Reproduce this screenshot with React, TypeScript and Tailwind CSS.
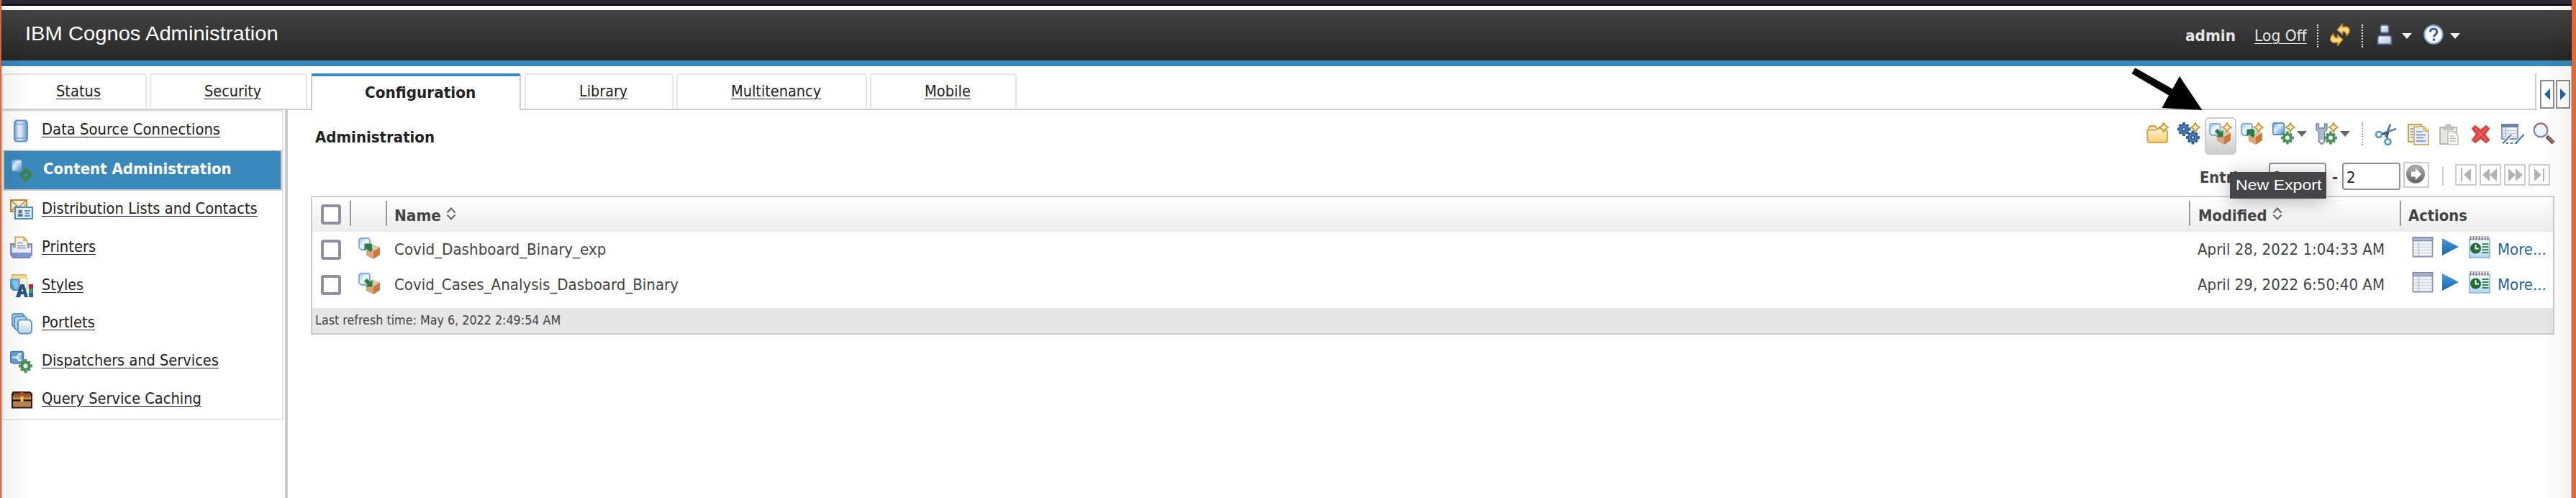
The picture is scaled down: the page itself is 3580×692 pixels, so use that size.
import { useLayoutEffect, useRef } from "react";
import type { ReactNode } from "react";

/* Text run laid out to an exact width, whatever the installed font's metrics. */
function Fit({ w, className = "", children }: { w: number; className?: string; children: ReactNode }) {
  const inner = useRef<HTMLSpanElement>(null);
  useLayoutEffect(() => {
    const el = inner.current;
    if (!el) return;
    el.style.transform = "none";
    el.style.transform = `scaleX(${w / el.offsetWidth})`;
  }, [w]);
  return (
    <span className="-mb-px block shrink-0 pt-px" style={{ width: w }}>
      <span
        ref={inner}
        className={`inline-block origin-left whitespace-pre align-top leading-[30px] ${className}`}
      >
        {children}
      </span>
    </span>
  );
}

const link = "underline decoration-1 underline-offset-[3px]";

function Icon({ children }: { children: ReactNode }) {
  return (
    <svg viewBox="0 0 32 32" className="block h-8 w-8 shrink-0">
      {children}
    </svg>
  );
}

function Defs() {
  return (
    <svg className="absolute h-0 w-0">
      <defs>
        <linearGradient id="blueV" x1="0" y1="0" x2="1" y2="1">
          <stop offset="0" stopColor="#9cc8f4" />
          <stop offset=".5" stopColor="#f2f8fe" />
          <stop offset="1" stopColor="#8fb9e6" />
        </linearGradient>
        <linearGradient id="cyl" x1="0" y1="0" x2="1" y2="0">
          <stop offset="0" stopColor="#6f9fdc" />
          <stop offset=".35" stopColor="#eef3fb" />
          <stop offset=".6" stopColor="#cfdcf2" />
          <stop offset="1" stopColor="#5a8cd2" />
        </linearGradient>
        <linearGradient id="barrel" x1="0" y1="0" x2="1" y2="1">
          <stop offset="0" stopColor="#5d9fe6" />
          <stop offset=".4" stopColor="#dff0fd" />
          <stop offset="1" stopColor="#3f82cc" />
        </linearGradient>
        <linearGradient id="page" x1="0" y1="0" x2="0" y2="1">
          <stop offset="0" stopColor="#ffffff" />
          <stop offset="1" stopColor="#b4d5ec" />
        </linearGradient>
        <linearGradient id="folder" x1="0" y1="0" x2="0" y2="1">
          <stop offset="0" stopColor="#fff3cf" />
          <stop offset="1" stopColor="#f5ce74" />
        </linearGradient>
        <linearGradient id="play" x1="0" y1="0" x2="0" y2="1">
          <stop offset="0" stopColor="#5a9bdc" />
          <stop offset=".5" stopColor="#2f7fc4" />
          <stop offset="1" stopColor="#1f63a4" />
        </linearGradient>
        <linearGradient id="go" x1="0" y1="0" x2="0" y2="1">
          <stop offset="0" stopColor="#b4b4b4" />
          <stop offset="1" stopColor="#5e5e5e" />
        </linearGradient>
        <linearGradient id="user" x1="0" y1="0" x2="1" y2="1">
          <stop offset="0" stopColor="#ffffff" />
          <stop offset="1" stopColor="#b3c0d4" />
        </linearGradient>
        <linearGradient id="lid" x1="0" y1="0" x2="0" y2="1">
          <stop offset="0" stopColor="#7a4724" />
          <stop offset="1" stopColor="#e8a468" />
        </linearGradient>
      </defs>
    </svg>
  );
}

function Star() {
  return (
    <path
      d="M25 .8 27.200 4.800 31.200 7 27.200 9.200 25 13.200 22.800 9.200 18.800 7l4-2.200z"
      fill="#fbf3c4"
      stroke="#c0993a"
      strokeWidth="1.800"
    />
  );
}

function Gear({ cx, cy, r, color }: { cx: number; cy: number; r: number; color: string }) {
  return (
    <g transform={`translate(${cx} ${cy}) scale(${r / 10})`}>
      <path
        d="M-2-10h4v3h-4zM-2 7h4v3h-4zM-10-2h3v4h-3zM7-2h3v4h-3zM-7.800-5.400l2.400-2.400 2.400 2.400-2.400 2.400zM3-5.400l2.400-2.400 2.400 2.400-2.400 2.400zM-7.800 5.400l2.400-2.400 2.400 2.400-2.400 2.400zM3 5.400l2.400-2.400 2.400 2.400-2.400 2.400z"
        fill={color}
      />
      <circle r="5.400" fill="#f4faf4" stroke={color} strokeWidth="4.400" />
    </g>
  );
}

function Package({ out = false, star = false }: { out?: boolean; star?: boolean }) {
  return (
    <Icon>
      <path d="M3 2h11l2 2v14H4l-3-3V4z" fill="url(#blueV)" stroke="#7aabe2" strokeWidth="1.800" />
      <path d="M11 16 20 10.500 30 14.500 21 20z" fill="#e2c3a8" />
      <path d="m11 16 10 4v11l-10-5z" fill="#d9a57c" />
      <path d="m21 20 9-5.500V25l-9 6z" fill="#c97a3e" />
      {out ? (
        <path d="M19 20V9.500H8.500l3.200 3.200-1 1 6 6z M8.500 9.500v10l3-3 5 4.500 3.500-3.500-5-5 3-3z" fill="#2a7d42" />
      ) : (
        <path d="M19.500 20.500V10.500l-3 3-5-4.500L8 12.500l5 5-3 3z" fill="#2a7d42" />
      )}
      {star && <Star />}
    </Icon>
  );
}

const DataSource = () => (
  <Icon>
    <path d="M9 1.500h14l2 3v23l-2 3H9l-2-3v-23z" fill="url(#cyl)" stroke="#5d92d6" strokeWidth="2" />
    <path d="M8 6.500h16M8 26h16" stroke="#79a5de" strokeWidth="1.500" />
  </Icon>
);
const ContentAdmin = () => (
  <Icon>
    <path d="M4 1h11l1.500 2v12L15 17H4l-1.500-2V3z" fill="url(#barrel)" stroke="#5c9ce0" strokeWidth="1.300" />
    <g transform="translate(22 22) scale(.9)">
      <path d="M-2-10h4l1 3h3l1 1v3l3 1v4l-3 1v3l-1 1H3l-1 3h-4l-1-3h-3l-1-1V3l-3-1v-4l3-1v-3l1-1h3z" fill="#3f8350" />
      <circle r="3" fill="#3b88ba" />
    </g>
  </Icon>
);
const Contacts = () => (
  <Icon>
    <path d="M1 3h22v16H1z" fill="#fdf6e3" stroke="#b98a3a" strokeWidth="2.200" />
    <path d="m2 4 10 9L22 4M2 18l7-7m13 0-3-2" fill="none" stroke="#c79a50" strokeWidth="1.800" />
    <path d="M7 13h24v16H7z" fill="#e8f3fb" stroke="#4e8fc6" strokeWidth="2.200" />
    <path d="M10.500 16h7v10h-7z" fill="#b9c6d3" />
    <path d="M12.500 17h3.500v4h-3.500zM11 22.500h6.500V26H11z" fill="#5d6b7d" />
    <path d="M20 18h8M21 21.500h6M20 25h8" stroke="#5596ca" strokeWidth="1.800" />
  </Icon>
);
const Printer = () => (
  <Icon>
    <path d="M1 11h5v8h19v-8h5v15l-3 4H4l-3-4z" fill="#b3c2e6" stroke="#6f88bf" strokeWidth="1.800" />
    <path d="M2 23h28v3l-3 3H5l-3-3z" fill="#8297cd" />
    <path d="M7 1.500h12l5 5V20H7z" fill="#f7f7f0" stroke="#cfae62" strokeWidth="1.800" />
    <path d="M19 1.500v5h5" fill="#eac16a" stroke="#cfae62" strokeWidth="1.300" />
    <path d="M10 9.500h8M10 13.500h11" stroke="#8296c8" strokeWidth="1.600" />
    <path d="M3 16.500h26V23H3z" fill="#e9eefa" />
    <path d="M10 16.500h12" stroke="#8296c8" strokeWidth="1.600" />
  </Icon>
);
const Styles = () => (
  <Icon>
    <path d="M3 1h19v20H3z" fill="#fbe9b8" stroke="#e0b964" strokeWidth="1.800" />
    <path d="M7 5h17v14H7z" fill="#fdf5dc" stroke="#eccb80" strokeWidth="1.200" />
    <path d="M0 6.500h13.500V23H4l-4-4z" fill="#4f9bd0" />
    <path d="M2 8.500h9.500v12H6z" fill="#8cc3e6" />
    <path d="M8 32 14.500 14h5L25 32h-5l-1-4h-4l-1 4zm7.500-8h3L17 18.500z" fill="#27508a" />
    <path d="M26 14h6v6h-6z" fill="#b82050" />
    <path d="M26 20h6v6h-6z" fill="#3e9d5c" />
    <path d="M26 26h6v6h-6z" fill="#2a62ab" />
  </Icon>
);
const Portlets = () => (
  <Icon>
    <g fill="#b9d6ee" stroke="#5c95c6" strokeWidth="1.900">
      <path d="M5 2h12l3 3v13l-3 3H6l-3-3V4z" />
      <path d="M8 5.500h12l3 3v13l-3 3H9l-3-3V8z" />
      <path d="M13 10.500h14l3 3v13l-3 3H14l-3-3v-13z" fill="url(#page)" />
    </g>
  </Icon>
);
const Dispatchers = () => (
  <Icon>
    <path d="M2 1.500h15l1.500 2V18H4L.8 15.500V3z" fill="#6ba2d4" stroke="#4379b2" strokeWidth="1.600" />
    <path d="M3 9.500h5l5-4M8 9.500l5 4M11 5h3.500v2M11 14h3.500v-2M15 9.500h-5" fill="none" stroke="#e4f1fb" strokeWidth="2" />
    <Gear cx={21.500} cy={21.500} r={9.500} color="#4b9058" />
  </Icon>
);
const Chest = () => (
  <Icon>
    <path d="M4 4h24l3 3v20.500H2V7z" fill="#2a1a10" />
    <path d="M5 6h23l1.500 9H3.500z" fill="url(#lid)" />
    <path d="M8 6v7M12 6v7M21 6v7M25 6v7" stroke="#6a3c1c" strokeWidth="1" />
    <path d="M4 17.500h25V25.500H4z" fill="#bd8252" />
    <path d="M2 15.300h29v1.700H2z" fill="#2a1a10" />
    <path d="M14.500 5h4v6h-4z" fill="#cf4a1c" />
    <path d="M14.500 11h4v7h-4z" fill="#f0cc3e" />
  </Icon>
);
const Folder = () => (
  <Icon>
    <path d="M3.500 9 6 5h7l2.500 3.500H17" fill="#fbe0b0" stroke="#d79a56" strokeWidth="2" />
    <path d="M2.500 10.500h12l3-2h6L30 12v14.500L28 28H4l-1.500-2z" fill="url(#folder)" stroke="#dba452" strokeWidth="2" />
    <Star />
  </Icon>
);
const Gears = () => (
  <Icon>
    <Gear cx={9} cy={9.500} r={9.500} color="#2a5c9c" />
    <circle cx="9" cy="9.500" r="4.500" fill="#2a5c9c" stroke="#6f9dcc" strokeWidth="1.400" />
    <circle cx="9" cy="9.500" r="1.500" fill="#c8dcf0" />
    <Gear cx={21.500} cy={21} r={9.500} color="#2a5c9c" />
    <circle cx="21.500" cy="21" r="4.500" fill="#2a5c9c" stroke="#6f9dcc" strokeWidth="1.400" />
    <circle cx="21.500" cy="21" r="1.500" fill="#c8dcf0" />
    <Star />
  </Icon>
);
const NewSource = () => (
  <Icon>
    <path d="M2 1h13l1.500 2v12L15 17H2L.8 15V3z" fill="url(#barrel)" stroke="#3678c0" strokeWidth="1.300" />
    <Gear cx={21} cy={21.500} r={9} color="#4b9058" />
    <Star />
  </Icon>
);
const Tools = () => (
  <Icon>
    <path d="M1 2v8l3.500 3.500V27l3 3h2l3-3V13.500L16 10V2h-3.500v6h-8V2z" fill="#a9bccd" stroke="#71879b" strokeWidth="1.400" />
    <circle cx="8.500" cy="26" r="2" fill="#fff" />
    <Gear cx={21} cy={21.500} r={9} color="#4b9058" />
    <Star />
  </Icon>
);
const Cut = () => (
  <Icon>
    <path d="M15 20 22 2.500M11 15.500 30 9" stroke="#5f7ba0" strokeWidth="2.800" />
    <path d="m10 17 10-3m-3 8 2-8" stroke="#34557f" strokeWidth="2.200" />
    <circle cx="6" cy="17" r="4" fill="#f3f8fd" stroke="#4d8fc8" strokeWidth="2.400" />
    <circle cx="18.500" cy="27" r="4" fill="#f3f8fd" stroke="#4d8fc8" strokeWidth="2.400" />
  </Icon>
);
const Copy = () => (
  <Icon>
    <path d="M3 3h18v24H3z" fill="#f2eed6" stroke="#bfa452" strokeWidth="2" />
    <path d="M5.500 9h4M5.500 13h4M5.500 17h4M5.500 21h4" stroke="#6f8dbd" strokeWidth="1.600" />
    <path d="M11 6h13l7 6v19H11z" fill="#e6effb" stroke="#c6b57c" strokeWidth="1.800" />
    <path d="M24 6v6.500h7z" fill="#efcf6c" stroke="#cdb15c" />
    <path d="M14 13h8M14 17.500h13M14 21.500h10M14 26h13" stroke="#6f8cc0" strokeWidth="1.600" />
  </Icon>
);
const Paste = () => (
  <Icon>
    <path d="M3 7h23v23H3z" fill="#e6e5df" stroke="#b5b4ae" strokeWidth="1.800" />
    <path d="M8 6h3l1-3h5l1 3h3v4H8z" fill="#c4c4c0" stroke="#aaa" />
    <path d="M14 13h9l5 5v13H14z" fill="#fafafa" stroke="#c2c2be" strokeWidth="1.600" />
    <path d="M17 19h5M17 22.500h8M17 26h8" stroke="#b9b9b6" strokeWidth="1.600" />
  </Icon>
);
const Delete = () => (
  <Icon>
    <path
      d="m8 4.500 7.500 6 7.500-6 4.500 4-6 8 6 8-4.500 4-7.500-6-7.500 6-4.500-4 6-8-6-8z"
      fill="#dc3f42"
      stroke="#c9584a"
      strokeWidth="1.500"
      strokeLinejoin="round"
    />
    <path d="m7.500 8 16 17M23.500 8l-16 17" stroke="#ef6a66" strokeWidth="1.500" />
  </Icon>
);
const FormEdit = () => (
  <Icon>
    <path d="M1 3h22v20H1z" fill="#eef2f7" stroke="#7f93af" strokeWidth="1.800" />
    <path d="M0 2h24v5H0z" fill="#6a82a6" />
    <path d="M2 11.500h20M2 15.500h20M2 19.500h20" stroke="#c3cedc" strokeWidth="1.300" />
    <path d="M6.500 7v15" stroke="#9fafc6" strokeWidth="1.300" />
    <path d="M2 29.500 14 17M20 29.500 31.500 17" stroke="#fff" strokeWidth="5" />
    <path d="M2 29.500 14 17M20 29.500 31.500 17M7 29h3m3 0h3m3 0h3" stroke="#3f78b4" strokeWidth="2" />
  </Icon>
);
const Search = () => (
  <Icon>
    <path d="m19.500 19.500 9 9" stroke="#6b4f42" strokeWidth="5.500" />
    <path d="m21 20.500 7 7" stroke="#a08068" strokeWidth="2" />
    <circle cx="11" cy="11" r="9.400" fill="#eef2fa" stroke="#7d84a3" strokeWidth="2.200" />
    <path d="M2 8a9.400 9.400 0 0 1 18 0" fill="none" stroke="#a7705c" strokeWidth="2" />
  </Icon>
);
const Properties = () => (
  <Icon>
    <path d="M2.500 3h27v26.500h-27z" fill="#f3f5f9" stroke="#8b94b0" strokeWidth="1.800" />
    <path d="M2.500 3h27v4.500h-27z" fill="#b4bdd0" stroke="#7c87a5" strokeWidth="1.400" />
    <path d="M3.500 12.500h25M3.500 16.500h25M3.500 20.500h25M3.500 24.500h25" stroke="#d0d6e0" strokeWidth="1.600" />
    <path d="M10.500 8v21" stroke="#bcc5d4" strokeWidth="1.400" />
  </Icon>
);
const Run = () => (
  <Icon>
    <path d="M1 4 24 16 1 28z" fill="url(#play)" />
  </Icon>
);
const Schedule = () => (
  <Icon>
    <path d="M2 5h28v26H2z" fill="url(#page)" stroke="#86b4da" strokeWidth="1.600" />
    <path d="M3.500 1v6M7.500 1v6M11.500 1v6M15.500 1v6M19.500 1v6M23.500 1v6M27.500 1v6" stroke="#8c7f80" strokeWidth="1.800" />
    <circle cx="10.500" cy="18" r="7.500" fill="#236b38" />
    <path d="M10.500 13v5.500H15" fill="none" stroke="#fff" strokeWidth="2" />
    <path d="M19.500 12h9M19.500 16h9M19.500 20h9M19.500 24h9" stroke="#3b8a56" strokeWidth="2.200" />
  </Icon>
);
const Refresh = () => (
  <Icon>
    <g fill="#f9d783" stroke="#b27f1c" strokeWidth="1.500" strokeLinejoin="round">
      <path d="M19.500 1 12 9.500 19.500 16v-4c3-.5 5 1.500 5.500 5.500 6-4.500 5.500-11.500-.5-12.500l-5 .5z" />
      <path d="M12.500 31.500 20 23l-7.500-6.500v4c-3 .5-5-1.500-5.500-5.500-6 4.500-5.500 11.500.5 12.500l5-.5z" />
    </g>
  </Icon>
);
const User = () => (
  <Icon>
    <path d="M12 3h8l1.500 2v7L20 13.500h-8L10.500 12V5z" fill="url(#user)" stroke="#5e74a3" strokeWidth="1.800" />
    <path d="M8.500 17.500h15L25.500 20v9.500h-19V20z" fill="url(#user)" stroke="#4d659b" strokeWidth="2" />
  </Icon>
);
const Help = () => (
  <Icon>
    <circle cx="16" cy="16" r="12.600" fill="#fff" stroke="#8aa7d6" strokeWidth="2.200" />
    <path d="M11.500 12.500c0-3 2-4.500 4.500-4.500s4.800 1.500 4.800 4.300c0 3.700-4.300 3.500-4.300 7" fill="none" stroke="#3d5fa0" strokeWidth="3.200" />
    <path d="M14.800 21.500h3.400v3.200h-3.400z" fill="#3d5fa0" />
  </Icon>
);

function Caret({ className }: { className: string }) {
  return (
    <svg viewBox="0 0 14 8" className={`block h-2 w-[14px] shrink-0 ${className}`}>
      <path d="M0 0h14L7 8z" />
    </svg>
  );
}

function Sort() {
  return (
    <svg viewBox="0 0 14 18" className="-mt-1.5 ml-[7px] block h-[18px] w-[14px] shrink-0">
      <path d="m1.500 7.500 5.500-6 5.500 6M1.500 10.500l5.500 6 5.500-6" fill="none" stroke="#666" strokeWidth="2" />
    </svg>
  );
}

const tabs = [
  { label: "Status", tw: 62, cls: "w-[201px] pl-[73px] mr-1" },
  { label: "Security", tw: 79, cls: "w-[219px] pl-[74px] mr-[5px]" },
  { label: "Configuration", tw: 154, active: true, cls: "w-[292px] pl-[73px] mr-[5px]" },
  { label: "Library", tw: 67, cls: "w-[207px] pl-[74px] mr-1" },
  { label: "Multitenancy", tw: 125, cls: "w-[265px] pl-[74px] mr-1" },
  { label: "Mobile", tw: 64, cls: "w-[204px] pl-[74px]" },
];

const menu = [
  { label: "Distribution Lists and Contacts", w: 300, icon: <Contacts /> },
  { label: "Printers", w: 75, icon: <Printer /> },
  { label: "Styles", w: 58, icon: <Styles /> },
  { label: "Portlets", w: 74, icon: <Portlets /> },
  { label: "Dispatchers and Services", w: 246, icon: <Dispatchers /> },
  { label: "Query Service Caching", w: 222, icon: <Chest /> },
];

const rows = [
  { name: "Covid_Dashboard_Binary_exp", nw: 294, date: "April 28, 2022 1:04:33 AM", out: true },
  { name: "Covid_Cases_Analysis_Dasboard_Binary", nw: 395, date: "April 29, 2022 6:50:40 AM", out: false },
];

const Checkbox = () => <div className="h-7 w-7 shrink-0 rounded-[4px] border-4 border-[#8f8f9d] bg-white" />;
const ColumnLine = () => <div className="-mt-1 h-[35px] w-0.5 shrink-0 bg-[#999]" />;

function PagerButton({ d, bar }: { d: string; bar?: string }) {
  return (
    <div className="h-[30px] w-[30px] shrink-0 border-2 border-[#ccc]">
      <svg viewBox="0 0 26 26" className="block h-[26px] w-[26px]">
        <path d={d} fill="#b3b3b3" />
        {bar && <path d={bar} fill="#b3b3b3" />}
      </svg>
    </div>
  );
}

function Header() {
  return (
    <div className="flex h-[78px] items-center border-b-8 border-[#3b88ba] bg-linear-to-b from-[#444] to-[#262626] pr-[155px] pl-[33px] text-[#e6e6e6]">
      <div className="-mt-[3px]">
        <Fit w={352} className="font-['Liberation_Sans',sans-serif] text-[28px] text-white">
          IBM Cognos Administration
        </Fit>
      </div>
      <div className="-mt-[2px] ml-auto flex items-center">
        <div className="mt-[5px] flex">
          <Fit w={70} className="font-bold">admin</Fit>
          <div className="ml-[26px]">
            <Fit w={73} className={link}>Log Off</Fit>
          </div>
        </div>
        <div className="mt-1 ml-[14px] h-8 border-l-2 border-dotted border-[#ddd]" />
        <div className="ml-[14px]"><Refresh /></div>
        <div className="mt-1 ml-[14px] h-8 border-l-2 border-dotted border-[#ddd]" />
        <div className="ml-[14px]"><User /></div>
        <Caret className="ml-2 mt-1 fill-[#eee]" />
        <div className="ml-[14px]"><Help /></div>
        <Caret className="ml-[7px] mt-1 fill-[#eee]" />
      </div>
    </div>
  );
}

function TabBar() {
  return (
    <div className="flex h-[61px] pt-2.5 pl-px">
      {tabs.map((t) => (
        <div key={t.label} className="flex">
          {t.active ? (
            <div className={`flex h-[51px] items-center rounded-t-[4px] border-x-2 border-t-4 border-x-[#ccc] border-t-[#3b88ba] ${t.cls}`}>
              <Fit w={t.tw} className="font-bold">{t.label}</Fit>
            </div>
          ) : (
            <div className={`flex h-[49px] items-center rounded-t-[3px] border-x-2 border-t-2 border-[#e6e6e6] ${t.cls}`}>
              <Fit w={t.tw} className={link}>{t.label}</Fit>
            </div>
          )}
        </div>
      ))}
      <div className="flex h-[51px] w-[2112px] border-r-2 border-[#ccc]" />
      <div className="mt-[9px] ml-[5px] flex h-10 gap-0.5">
        <div className="flex h-10 w-5 items-center justify-center border-2 border-[#8c8c8c]">
          <svg viewBox="0 0 8 16" className="block h-4 w-2"><path d="M8 0v16L0 8z" fill="#1f64a0" /></svg>
        </div>
        <div className="flex h-10 w-5 items-center justify-center border-2 border-[#8c8c8c]">
          <svg viewBox="0 0 8 16" className="block h-4 w-2"><path d="M0 0v16l8-8z" fill="#1f64a0" /></svg>
        </div>
      </div>
    </div>
  );
}

function TabRule() {
  return (
    <div className="-mt-0.5 flex h-0.5 pl-px">
      <div className="w-[431px] bg-[#ccc]" />
      <div className="ml-[288px] w-[2803px] bg-[#ccc]" />
    </div>
  );
}

function Sidebar() {
  return (
    <div className="ml-px h-[431px] w-[391px] shrink-0 border-2 border-l border-[#e6e6e6]">
      <div className="flex h-[53px] items-center pl-[9px]">
        <DataSource />
        <div className="-mt-0.5 ml-[13px]">
          <Fit w={248} className={link}>Data Source Connections</Fit>
        </div>
      </div>
      <div className="flex h-[57px] w-[388px] items-center border-2 border-[#ccc] bg-[#3b88ba] pl-2">
        <ContentAdmin />
        <div className="-mt-[3px] ml-[14px]">
          <Fit w={262} className="font-bold text-white">Content Administration</Fit>
        </div>
      </div>
      {menu.map((m) => (
        <div key={m.label} className="flex h-[52.830px] items-center pl-[10px]">
          {m.icon}
          <div className="-mt-0.5 ml-3">
            <Fit w={m.w} className={link}>{m.label}</Fit>
          </div>
        </div>
      ))}
    </div>
  );
}

function Toolbar() {
  return (
    <div className="-mr-0.5 ml-auto flex pt-[7px]">
      <div className="mr-3"><Folder /></div>
      <div className="mr-1.5"><Gears /></div>
      <div className="-mt-[7px] mr-1.5 flex h-[52px] w-11 justify-center rounded-md border-2 border-[#ccc] bg-linear-to-b from-white to-[#ccc] pt-[5px]">
        <Package star />
      </div>
      <div className="mr-3"><Package out star /></div>
      <NewSource />
      <Caret className="mt-3 mr-3 ml-0.5 fill-[#666]" />
      <Tools />
      <Caret className="mt-3 ml-0.5 fill-[#666]" />
      <div className="mr-4 ml-4 h-8 border-l-2 border-dotted border-[#aaa]" />
      <div className="flex gap-3">
        <Cut />
        <Copy />
        <Paste />
        <Delete />
        <FormEdit />
        <Search />
      </div>
    </div>
  );
}

function Pager() {
  return (
    <div className="mr-1.5 ml-auto flex items-start text-[#444]">
      <div className="mt-1.5">
        <Fit w={86} className="font-bold">Entries:</Fit>
      </div>
      <div className="mt-px ml-[10px] flex h-[38px] w-20 items-center rounded-[4px] border-2 border-[#8f8f9d] bg-white pt-1 pl-1 text-[#222]">
        <Fit w={13}>1</Fit>
      </div>
      <div className="mt-1.5 ml-2 w-[14px]">
        <Fit w={8} className="font-bold">-</Fit>
      </div>
      <div className="mt-px flex h-[38px] w-[81px] items-center rounded-[4px] border-2 border-[#8f8f9d] bg-white pt-1 pl-1 text-[#222]">
        <Fit w={13}>2</Fit>
      </div>
      <div className="ml-1 h-9 w-9 border-2 border-[#ccc] p-0.5">
        <svg viewBox="0 0 28 28" className="block h-7 w-7">
          <circle cx="13" cy="13" r="13" fill="#8d8d8d" />
          <circle cx="13" cy="13" r="11.500" fill="url(#go)" />
          <path d="M7 9.500h6v-5l8 8.500-8 8.500v-5H7z" fill="#fff" />
        </svg>
      </div>
      <div className="mt-[7px] ml-[18px] h-[26px] w-0.5 bg-[#ccc]" />
      <div className="mt-[3px] ml-4 flex gap-1">
        <PagerButton d="M20 4v18L10 13z" bar="M6 4h2v18H6z" />
        <PagerButton d="M12 4v18L2 13zM22 4v18L12 13z" />
        <PagerButton d="M4 4v18l10-9zM14 4v18l10-9z" />
        <PagerButton d="M6 4v18l10-9z" bar="M18 4h2v18h-2z" />
      </div>
    </div>
  );
}

function Table() {
  return (
    <div className="h-[193px] w-[3118px] border-2 border-[#ccc] text-[#444]">
      <div className="flex h-12 items-center bg-linear-to-b from-white to-[#ececec] font-bold">
        <div className="w-[52px] shrink-0 pl-3"><Checkbox /></div>
        <ColumnLine />
        <div className="w-12 shrink-0" />
        <ColumnLine />
        <div className="flex w-[2504px] shrink-0 items-center pt-1 pl-2.5">
          <Fit w={65}>Name</Fit>
          <Sort />
        </div>
        <ColumnLine />
        <div className="flex w-[291px] shrink-0 items-center pt-1 pl-[11px]">
          <Fit w={96}>Modified</Fit>
          <Sort />
        </div>
        <ColumnLine />
        <div className="pt-1 pl-[10px]">
          <Fit w={82}>Actions</Fit>
        </div>
      </div>
      {rows.map((r) => (
        <div key={r.name} className="flex h-[49px] items-center">
          <div className="w-16 shrink-0 pl-3"><Checkbox /></div>
          <div className="-mt-[3px] w-[50px] shrink-0"><Package out={r.out} /></div>
          <div className="mt-px w-[2506px] shrink-0">
            <Fit w={r.nw}>{r.name}</Fit>
          </div>
          <div className="mt-px w-[297px] shrink-0">
            <Fit w={260}>{r.date}</Fit>
          </div>
          <div className="-mt-[7px] flex gap-2.5">
            <Properties />
            <div className="w-[27px]"><Run /></div>
            <Schedule />
          </div>
          <div className="mt-px ml-[9px]">
            <Fit w={68} className="text-[#286499]">More...</Fit>
          </div>
        </div>
      ))}
      <div className="mt-2 flex h-[35px] items-center bg-[#e6e6e6] pb-px pl-1">
        <Fit w={341} className="text-[18px]">Last refresh time: May 6, 2022 2:49:54 AM</Fit>
      </div>
    </div>
  );
}

export default function App() {
  return (
    <div className="relative flex h-[692px] w-[3580px] overflow-hidden bg-white font-['DejaVu_Sans_Condensed','DejaVu_Sans',sans-serif] text-[22px] text-[#222]">
      <Defs />
      <div className="w-0.5 shrink-0 bg-[#dc6c36]" />
      <div className="w-[3572px] shrink-0">
        <div className="h-2 border-b-2 border-black bg-[#2b2933]" />
        <div className="h-1.5" />
        <Header />
        <TabBar />
        <TabRule />
        <div className="flex h-[539px]">
          <Sidebar />
          <div className="ml-0.5 w-1 shrink-0 bg-[#ccc]" />
          <div className="pt-[10px] pl-8">
            <div className="flex h-[62px] w-[3118px] items-start">
              <div className="mt-3 ml-1.5">
                <Fit w={166} className="font-bold">Administration</Fit>
              </div>
              <Toolbar />
            </div>
            <div className="flex h-[47px] w-[3118px]">
              <Pager />
            </div>
            <Table />
          </div>
        </div>
      </div>
      <div className="w-1.5 shrink-0 bg-[#dc6c36]" />
      <div className="absolute top-2 left-0.5 h-full w-10 border-l border-black/25 bg-linear-to-r from-black/5 to-transparent" />
      <div className="absolute top-2 right-1.5 h-full w-10 border-r border-black/25 bg-linear-to-l from-black/5 to-transparent" />
      <div className="absolute top-[239px] left-[3099px] flex h-[37px] w-[134px] items-center bg-[#464648] pl-2 shadow-[0_4px_24px_rgba(0,0,0,0.3)]">
        <Fit w={119} className="font-['Liberation_Sans',sans-serif] text-[20px] text-white">New Export</Fit>
      </div>
      <svg viewBox="0 0 100 60" className="absolute top-[94px] left-[2962px] h-[60px] w-[100px]">
        <path d="M5.200.3 57.300 29.500 67 12 98.500 59 42.500 56l9.500-17.500L.5 8.300z" />
      </svg>
    </div>
  );
}
